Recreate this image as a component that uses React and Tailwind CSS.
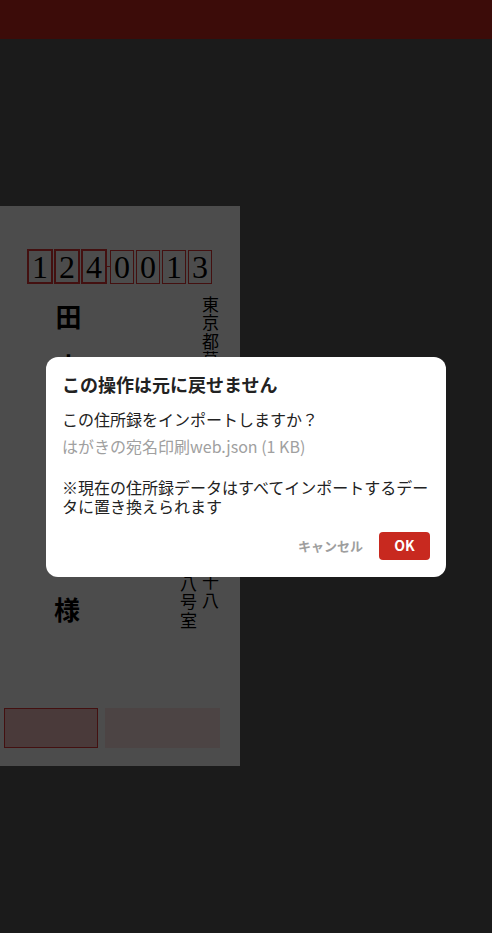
import React from "react";

const jp = { fontFamily: '"Noto Sans CJK JP", "Noto Sans", sans-serif' };

const PostalBox = ({ d, bold }) => (
  <div
    className={
      bold
        ? "w-[26px] h-[35px] border-2 border-[#e03838] flex items-center justify-center"
        : "w-[24px] h-[34px] border border-[#e03838] flex items-center justify-center"
    }
  >
    <span
      className="text-[32px] leading-none text-black"
      style={{ fontFamily: '"Liberation Serif", serif' }}
    >
      {d}
    </span>
  </div>
);

// はがきプレビュー
const Postcard = () => (
  <div className="relative w-[240px] h-[560px] bg-white" style={jp}>
    <div className="absolute left-[27px] top-[43px] flex items-center">
      <div className="flex gap-[1px]">
        <PostalBox d="1" bold />
        <PostalBox d="2" bold />
        <PostalBox d="4" bold />
      </div>
      <div className="w-[3px] h-px bg-[#e03838]" />
      <div className="flex gap-[2px]">
        <PostalBox d="0" />
        <PostalBox d="0" />
        <PostalBox d="1" />
        <PostalBox d="3" />
      </div>
    </div>

    {/* 住所 */}
    <div
      className="absolute right-[19px] top-[90px] text-[17px] leading-[22px] tracking-[1.5px] text-black"
      style={{ writingMode: "vertical-rl" }}
    >
      東京都葛飾区東立石四丁目二十番十八
    </div>
    <div
      className="absolute right-[41px] top-[184px] text-[17px] leading-[22px] tracking-[1.5px] text-black"
      style={{ writingMode: "vertical-rl" }}
    >
      ハガキマンション八〇八号室
    </div>

    {/* 宛名 */}
    <div
      className="absolute left-[54px] top-[98px] text-[26px] leading-[28px] tracking-[24px] font-semibold text-black"
      style={{ writingMode: "vertical-rl" }}
    >
      田中太郎
    </div>
    <div className="absolute left-[54px] top-[386px] text-[26px] leading-[34px] font-semibold text-black">
      様
    </div>

    <div className="absolute left-[4px] top-[502px] flex gap-[7px]">
      <div className="w-[94px] h-[40px] border border-[#e03838] bg-[#f7c4c4]" />
      <div className="w-[115px] h-[40px] bg-[#ffe4e4]" />
    </div>
  </div>
);

export default function App() {
  return (
    <div className="min-h-[933px] bg-[#5a5a5a]" style={jp}>
      <header className="h-[39px] bg-[#c8291f]" />
      <main className="pt-[167px]">
        <Postcard />
      </main>

      <div className="fixed inset-0 bg-black/70 flex items-center justify-center">
        <div className="w-[400px] bg-white rounded-[12px] px-4 pt-[14px] pb-[17px] text-[#222]">
          <h2 className="text-[18px] leading-[27px] font-bold">この操作は元に戻せません</h2>
          <div className="mt-[11px] text-[16px]">
            <p className="leading-[20px]">この住所録をインポートしますか？</p>
            <p className="mt-[7px] leading-[20px] text-[#a0a0a0]">はがきの宛名印刷web.json (1 KB)</p>
            <p className="mt-[22px] leading-[19px]">
              ※現在の住所録データはすべてインポートするデータに置き換えられます
            </p>
          </div>
          <div className="mt-[16px] flex justify-end items-center">
            <button className="h-[28px] px-4 text-[13px] font-bold text-[#9e9e9e]">キャンセル</button>
            <button className="h-[28px] w-[51px] rounded-[4px] bg-[#c8291f] text-[14px] font-bold text-white">
              OK
            </button>
          </div>
        </div>
      </div>
    </div>
  );
}
